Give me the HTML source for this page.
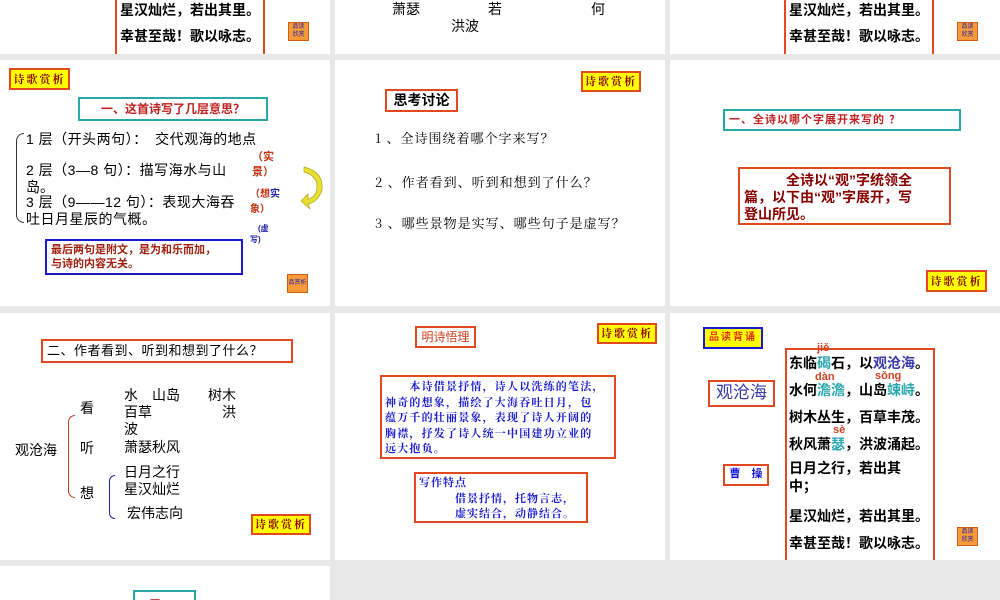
<!DOCTYPE html>
<html><head><meta charset="utf-8"><style>
*{margin:0;padding:0;box-sizing:border-box}
body{width:1000px;height:600px;background:#e8e8e8;position:relative;overflow:hidden;font-family:"Liberation Sans","Noto Sans CJK SC",sans-serif;color:#000}
.s{position:absolute;background:#fff;overflow:hidden}
.a{position:absolute;white-space:nowrap}
.ob{position:absolute;border:2px solid #e04a1e}
.tag{position:absolute;background:#ff0;border:2px solid #e04a1e;font-size:11px;font-weight:bold;color:#800;text-align:center;font-family:"Noto Serif CJK SC",serif;letter-spacing:2px}
.ic{position:absolute;width:21px;height:19px;background:#f79a3a;border:1px solid #d06010;font-size:6px;color:#22a;line-height:8px;text-align:center}
.poem{font-size:14px;font-weight:bold;line-height:26px}
.cy{color:#2aa8b0}.bl{color:#3b3ba8}
.py{position:absolute;font-size:11px;color:#d04020;font-weight:bold}
.q{font-size:13px;letter-spacing:1px;font-family:'Noto Serif CJK SC',serif}
</style></head><body>
<!-- row 0 -->
<div class="s" style="left:0;top:0;width:330px;height:54px">
 <div class="ob" style="left:115px;top:-4px;width:150px;height:60px;border-top:none;border-bottom:none"></div>
 <div class="a poem" style="left:120px;top:-3px">星汉灿烂，若出其里。</div>
 <div class="a poem" style="left:120px;top:23px">幸甚至哉！歌以咏志。</div>
 <div class="ic" style="left:288px;top:22px">品读<br>欣赏</div>
</div>
<div class="s" style="left:335px;top:0;width:330px;height:54px;font-size:14px">
 <div class="a" style="left:57px;top:-1px">萧瑟</div><div class="a" style="left:153px;top:-1px">若</div><div class="a" style="left:256px;top:-1px">何</div>
 <div class="a" style="left:116px;top:16px">洪波</div>
</div>
<div class="s" style="left:670px;top:0;width:330px;height:54px">
 <div class="ob" style="left:114px;top:-4px;width:150px;height:60px;border-top:none;border-bottom:none"></div>
 <div class="a poem" style="left:119px;top:-3px">星汉灿烂，若出其里。</div>
 <div class="a poem" style="left:119px;top:23px">幸甚至哉！歌以咏志。</div>
 <div class="ic" style="left:287px;top:22px">品读<br>欣赏</div>
</div>
<!-- row 1 -->
<div class="s" style="left:0;top:60px;width:330px;height:246px">
 <div class="tag" style="left:9px;top:8px;width:61px;height:22px;line-height:18px">诗歌赏析</div>
 <div class="a" style="left:78px;top:37px;width:190px;height:24px;border:2px solid #2aa8a8;color:#c02020;font-size:12px;font-weight:bold;text-align:center;line-height:20px">一、这首诗写了几层意思？</div>
 <div class="a" style="left:16px;top:73px;width:8px;height:90px;border:1.5px solid #333;border-right:none;border-radius:8px 0 0 8px"></div>
 <div class="a" style="left:26px;top:69px;font-size:14px;letter-spacing:0.5px">1 层（开头两句）：　交代观海的地点</div>
 <div class="a" style="left:26px;top:100px;font-size:14px;letter-spacing:0.5px">2 层（3—8 句）：描写海水与山</div>
 <div class="a" style="left:26px;top:117px;font-size:14px">岛。</div>
 <div class="a" style="left:26px;top:132px;font-size:14px;letter-spacing:0.5px">3 层（9——12 句）：表现大海吞</div>
 <div class="a" style="left:26px;top:149px;font-size:14px;letter-spacing:0.5px">吐日月星辰的气概。</div>
 <div class="a" style="left:252px;top:90px;font-size:11px;color:#c03010;font-weight:bold;line-height:15px">（实<br>景）</div>
 <div class="a" style="left:250px;top:127px;font-size:10px;color:#c03010;font-weight:bold;line-height:15px">（想<span style="color:#22a">实</span><br>象）</div>
 <div class="a" style="left:250px;top:163px;font-size:8px;color:#22a;font-weight:bold;line-height:11px">　(虚<br>写)</div>
 <svg class="a" style="left:300px;top:104px" width="26" height="46"><path d="M4 3 Q24 8 22 26 Q18 38 8 40 L10 45 L1 37 L8 30 L8 35 Q16 33 17 24 Q18 12 4 8 Z" fill="#e8e030" stroke="#b0a020" stroke-width="0.7"/></svg>
 <div class="a" style="left:45px;top:179px;width:198px;height:36px;border:2.5px solid #1a1ad0;color:#a02010;font-size:11px;font-weight:bold;line-height:14px;padding:2px 4px">最后两句是附文，是为和乐而加，<br>与诗的内容无关。</div>
 <div class="ic" style="left:287px;top:214px;font-size:6px;line-height:17px">品赏析</div>
</div>
<div class="s" style="left:335px;top:60px;width:330px;height:246px">
 <div class="tag" style="left:246px;top:11px;width:60px;height:21px;line-height:17px">诗歌赏析</div>
 <div class="a" style="left:50px;top:29px;width:73px;height:23px;border:2px solid #e04a1e;font-size:14px;font-weight:bold;text-align:center;line-height:19px">思考讨论</div>
 <div class="a q" style="left:40px;top:68px">1 、全诗围绕着哪个字来写？</div>
 <div class="a q" style="left:40px;top:112px">2 、作者看到、听到和想到了什么？</div>
 <div class="a q" style="left:40px;top:153px">3 、哪些景物是实写、哪些句子是虚写？</div>
</div>
<div class="s" style="left:670px;top:60px;width:330px;height:246px">
 <div class="a" style="left:53px;top:49px;width:238px;height:22px;border:2px solid #2aa8a8;color:#c02020;font-size:11px;font-weight:bold;line-height:18px;padding-left:4px;letter-spacing:1px">一、全诗以哪个字展开来写的 ？</div>
 <div class="a" style="left:68px;top:107px;width:213px;height:58px;border:2.5px solid #e04a1e;color:#800;font-size:14px;font-weight:bold;line-height:17px;padding:3px 4px">　　　全诗以“观”字统领全<br>篇，以下由“观”字展开，写<br>登山所见。</div>
 <div class="tag" style="left:256px;top:210px;width:61px;height:22px;line-height:18px">诗歌赏析</div>
</div>
<!-- row 2 -->
<div class="s" style="left:0;top:313px;width:330px;height:247px">
 <div class="a" style="left:41px;top:26px;width:252px;height:24px;border:2.5px solid #e04a1e;font-size:13px;line-height:19px;padding-left:4px;letter-spacing:0.5px">二、作者看到、听到和想到了什么？</div>
 <div class="a" style="left:15px;top:127px;font-size:14px">观沧海</div>
 <div class="a" style="left:68px;top:102px;width:7px;height:83px;border:1.5px solid #c04020;border-right:none;border-radius:7px 0 0 7px"></div>
 <div class="a" style="left:80px;top:85px;font-size:14px">看</div>
 <div class="a" style="left:80px;top:125px;font-size:14px">听</div>
 <div class="a" style="left:80px;top:170px;font-size:14px">想</div>
 <div class="a" style="left:124px;top:74px;font-size:14px;line-height:17px">水　山岛　　树木<br>百草　　　　　洪<br>波</div>
 <div class="a" style="left:124px;top:124px;font-size:14px">萧瑟秋风</div>
 <div class="a" style="left:109px;top:162px;width:6px;height:44px;border:1.5px solid #2222a0;border-right:none;border-radius:6px 0 0 6px"></div>
 <div class="a" style="left:124px;top:151px;font-size:14px;line-height:17px">日月之行<br>星汉灿烂</div>
 <div class="a" style="left:127px;top:190px;font-size:14px">宏伟志向</div>
 <div class="tag" style="left:251px;top:201px;width:60px;height:21px;line-height:17px">诗歌赏析</div>
</div>
<div class="s" style="left:335px;top:313px;width:330px;height:247px">
 <div class="a" style="left:80px;top:13px;width:61px;height:22px;border:2px solid #e04a1e;color:#d04020;font-size:12px;text-align:center;line-height:18px">明诗悟理</div>
 <div class="tag" style="left:262px;top:10px;width:60px;height:21px;line-height:17px">诗歌赏析</div>
 <div class="a" style="left:45px;top:62px;width:236px;height:84px;border:2.5px solid #e04a1e;color:#1a1ad0;font-size:11px;font-weight:bold;line-height:15.5px;padding:2px 3px;letter-spacing:1.2px;font-family:'Noto Serif CJK SC',serif">　　本诗借景抒情，诗人以洗练的笔法，<br>神奇的想象，描绘了大海吞吐日月，包<br>蕴万千的壮丽景象，表现了诗人开阔的<br>胸襟，抒发了诗人统一中国建功立业的<br>远大抱负。</div>
 <div class="a" style="left:79px;top:159px;width:174px;height:51px;border:2.5px solid #e04a1e;color:#1a1ad0;font-size:11px;font-weight:bold;line-height:15.5px;padding:1px 3px;letter-spacing:1px;font-family:'Noto Serif CJK SC',serif">写作特点<br>　　　借景抒情，托物言志，<br>　　　虚实结合，动静结合。</div>
</div>
<div class="s" style="left:670px;top:313px;width:330px;height:247px">
 <div class="a" style="left:33px;top:14px;width:60px;height:22px;border:2.5px solid #1a1ad0;background:#ff0;color:#e03010;font-size:10px;font-weight:bold;text-align:center;line-height:17px;letter-spacing:2px">品读背诵</div>
 <div class="a" style="left:38px;top:67px;width:67px;height:27px;border:2.5px solid #e04a1e;color:#3b3ba8;font-size:17px;text-align:center;line-height:22px">观沧海</div>
 <div class="a" style="left:53px;top:151px;width:46px;height:22px;border:2.5px solid #e04a1e;color:#1a1ad0;font-size:11px;font-weight:bold;text-align:center;line-height:17px">曹　操</div>
 <div class="ob" style="left:115px;top:35px;width:150px;height:220px;border-width:2.5px;border-bottom:none"></div>
 <div class="py" style="left:147px;top:29px">jiě</div>
 <div class="py" style="left:145px;top:58px">dàn</div>
 <div class="py" style="left:205px;top:57px">sǒng</div>
 <div class="py" style="left:163px;top:111px">sè</div>
 <div class="a poem" style="left:119px;top:37px">东临<span class="cy">碣</span>石，以<span class="bl">观沧海</span>。</div>
 <div class="a poem" style="left:119px;top:64px">水何<span class="cy">澹澹</span>，山岛<span class="cy">竦峙</span>。</div>
 <div class="a poem" style="left:119px;top:91px">树木丛生，百草丰茂。</div>
 <div class="a poem" style="left:119px;top:118px">秋风萧<span class="cy">瑟</span>，洪波涌起。</div>
 <div class="a poem" style="left:119px;top:146px;line-height:18px">日月之行，若出其<br>中；</div>
 <div class="a poem" style="left:119px;top:190px">星汉灿烂，若出其里。</div>
 <div class="a poem" style="left:119px;top:217px">幸甚至哉！歌以咏志。</div>
 <div class="ic" style="left:287px;top:214px">品读<br>欣赏</div>
</div>
<!-- row 3 -->
<div class="s" style="left:0;top:566px;width:330px;height:34px">
 <div class="a" style="left:133px;top:24px;width:63px;height:20px;border:2px solid #2aa8a8"></div>
 <div class="a" style="left:150px;top:26px;font-size:10px;color:#c02020;font-weight:bold">一、</div>
</div>
</body></html>
